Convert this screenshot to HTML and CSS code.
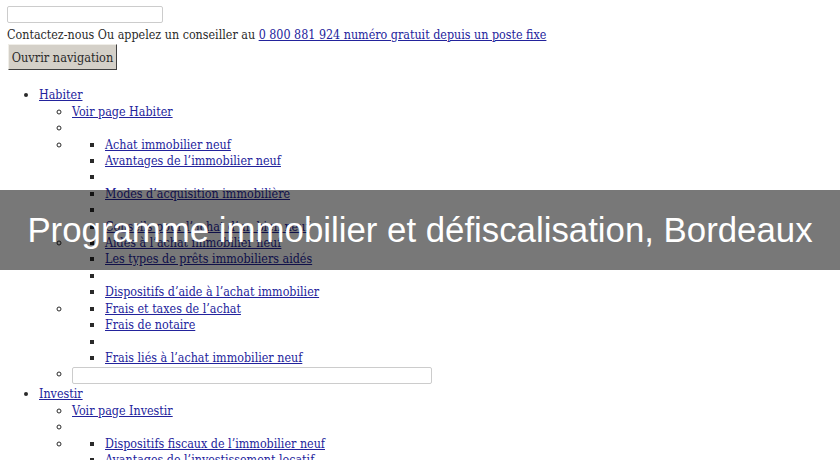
FILE: index.html
```html
<!DOCTYPE html>
<html lang="fr">
<head>
    <meta charset="UTF-8">
    <meta name="viewport" content="width=device-width, initial-scale=1.0">
    <title>Programme immobilier et défiscalisation, Bordeaux</title>
    <link rel="stylesheet" href="styles.css">
</head>
<body>
    <input type="text" class="search-top">
    <div class="contact">Contactez-nous Ou appelez un conseiller au <a href="#">0 800 881 924 numéro gratuit depuis un poste fixe</a></div>
    <button class="nav-toggle">Ouvrir navigation</button>

    <ul class="menu">
        <li><a href="#">Habiter</a>
            <ul>
                <li><a href="#">Voir page Habiter</a></li>
                <li></li>
                <li>
                    <ul>
                        <li><a href="#">Achat immobilier neuf</a></li>
                        <li><a href="#">Avantages de l’immobilier neuf</a></li>
                        <li></li>
                        <li><a href="#">Modes d’acquisition immobilière</a></li>
                        <li></li>
                        <li><a href="#">Conseils pour l’achat d’un bien neuf</a></li>
                    </ul>
                </li>
                <li>
                    <ul>
                        <li><a href="#">Aides à l’achat immobilier neuf</a></li>
                        <li><a href="#">Les types de prêts immobiliers aidés</a></li>
                        <li></li>
                        <li><a href="#">Dispositifs d’aide à l’achat immobilier</a></li>
                    </ul>
                </li>
                <li>
                    <ul>
                        <li><a href="#">Frais et taxes de l’achat</a></li>
                        <li><a href="#">Frais de notaire</a></li>
                        <li></li>
                        <li><a href="#">Frais liés à l’achat immobilier neuf</a></li>
                    </ul>
                </li>
                <li><input type="text" class="search-menu"></li>
            </ul>
        </li>
        <li><a href="#">Investir</a>
            <ul>
                <li><a href="#">Voir page Investir</a></li>
                <li></li>
                <li>
                    <ul>
                        <li><a href="#">Dispositifs fiscaux de l’immobilier neuf</a></li>
                        <li><a href="#">Avantages de l’investissement locatif</a></li>
                        <li></li>
                        <li><a href="#">Loi Pinel</a></li>
                    </ul>
                </li>
            </ul>
        </li>
    </ul>

    <div class="banner">Programme immobilier et défiscalisation, Bordeaux</div>
</body>
</html>
```

FILE: styles.css
```css
body {
    font-family: "DejaVu Serif Condensed", "DejaVu Serif", serif;
    font-stretch: condensed;
    font-size: 12.4px;
    line-height: 16.4px;
    color: #2a2a2a;
    margin: 6px 7px;
    background: #fff;
}

a {
    color: #23239c;
}

.search-top {
    display: block;
    width: 156px;
    height: 17px;
    box-sizing: border-box;
    border: 1px solid #ccc;
    border-radius: 2px;
    margin: 0;
    padding: 0;
}

.contact {
    margin-top: 4px;
    line-height: 16.4px;
}

.nav-toggle {
    display: block;
    margin: 1px 0 0 1px;
    width: 109px;
    height: 26px;
    padding: 0;
    font-family: inherit;
    font-stretch: condensed;
    font-size: 12.6px;
    color: #2a2a2a;
    background: #d4d0c8;
    border: 1px solid;
    border-color: #f0eee8 #404040 #404040 #f0eee8;
    border-radius: 0;
}

.menu {
    margin: 17px 0 0;
    padding-left: 32px;
    list-style: disc;
}

.menu ul {
    margin: 0;
    padding-left: 33px;
    list-style: circle;
}

.menu ul ul {
    list-style: square;
}

.menu li {
    min-height: 16.4px;
}

.search-menu {
    width: 360px;
    height: 17px;
    box-sizing: border-box;
    border: 1px solid #ccc;
    border-radius: 2px;
    margin: 1px 0 2px;
    padding: 0;
    vertical-align: top;
}

.banner {
    position: absolute;
    left: 0;
    right: 0;
    top: 190px;
    height: 80px;
    background: rgba(0, 0, 0, 0.53);
    color: #fff;
    font-family: "Liberation Sans", Arial, sans-serif;
    font-stretch: normal;
    font-size: 34.8px;
    line-height: 80px;
    text-align: center;
}
```
